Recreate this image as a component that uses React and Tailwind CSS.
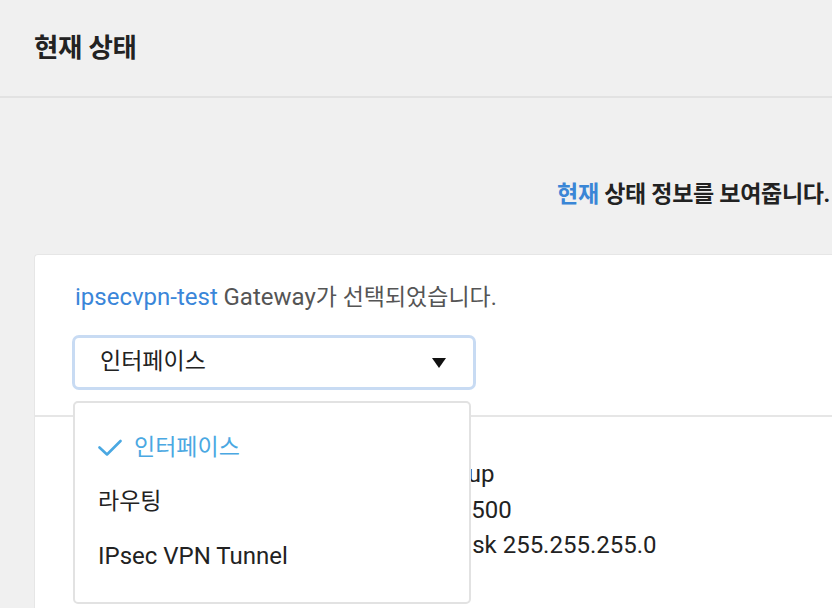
import React from "react";

const font = { fontFamily: "Roboto, 'Noto Sans CJK KR', sans-serif" };

function CheckIcon() {
  return (
    <svg width="24" height="18" viewBox="0 0 24 18" fill="none" className="shrink-0">
      <path d="M1.5 8.5L9 15.5L22.5 2" stroke="#4aa8e2" strokeWidth="2.6" strokeLinecap="round" strokeLinejoin="round" />
    </svg>
  );
}

export default function App() {
  const options = [
    { label: "인터페이스", latin: false },
    { label: "라우팅", latin: false },
    { label: "IPsec VPN Tunnel", latin: true },
  ];
  const selected = 0;

  return (
    <div className="w-[832px] h-[608px] overflow-hidden bg-[#f0f0f0] relative" style={font}>
      {/* header */}
      <div className="h-[98px] border-b-2 border-[#e2e2e2] flex items-center pl-[34px]">
        <h1 className="text-[26.5px] font-bold text-[#222] leading-none tracking-[-0.3px]">현재 상태</h1>
      </div>

      <div className="pl-[34px]">
        <div className="h-[156px] flex justify-end pt-[81px] pr-[2px]">
          <p className="text-[23px] font-bold text-[#222] leading-[32px] tracking-[-0.3px]">
            <span className="text-[#3a86d6]">현재</span> 상태 정보를 보여줍니다.
          </p>
        </div>

        {/* card */}
        <div className="bg-white rounded-tl-[4px] border-l border-t border-[#e6e6e6] h-[400px]">
          <div className="px-[40px] pt-[27px] pb-[28px] border-b-2 border-[#e6e6e6]">
            <p className="text-[23px] leading-[30px] text-[#555]">
              <span className="text-[24px] text-[#3a86d9]">ipsecvpn-test</span>{" "}
              <span className="text-[24px]">Gateway</span>가 선택되었습니다.
            </p>
            <div className="mt-[25px] w-[398px] h-[49px] rounded-[4px] bg-white ring-[3px] ring-[#c8dbf3] flex items-center justify-between pl-[25px] pr-[27px]">
              <span className="text-[23px] text-[#222]">인터페이스</span>
              <span className="w-0 h-0 border-l-[7px] border-r-[7px] border-t-[10px] border-l-transparent border-r-transparent border-t-[#111]" />
            </div>
          </div>

          <div className="pl-[65px] pt-[40px] text-[24px] text-[#222] leading-[35.5px] whitespace-nowrap">
            <p>Interface eth0 line protocol is now up</p>
            <p>Maximum transmission unit total 1500</p>
            <p>IPv4 address 192.168.100.1 netmask 255.255.255.0</p>
          </div>
        </div>
      </div>

      {/* dropdown menu */}
      <div className="absolute left-[73px] top-[401px] w-[398px] h-[203px] bg-white border-2 border-[#e2e2e2] rounded-[5px] pt-[18px]">
        {options.map((o, i) => (
          <div key={o.label} className="h-[54px] flex items-center pl-[23px] gap-[12px]">
            {i === selected && <CheckIcon />}
            <span
              className={`${o.latin ? "text-[24px]" : "text-[23px]"} ${
                i === selected ? "text-[#4aa8e2]" : "text-[#222]"
              }`}
            >
              {o.label}
            </span>
          </div>
        ))}
      </div>
    </div>
  );
}
